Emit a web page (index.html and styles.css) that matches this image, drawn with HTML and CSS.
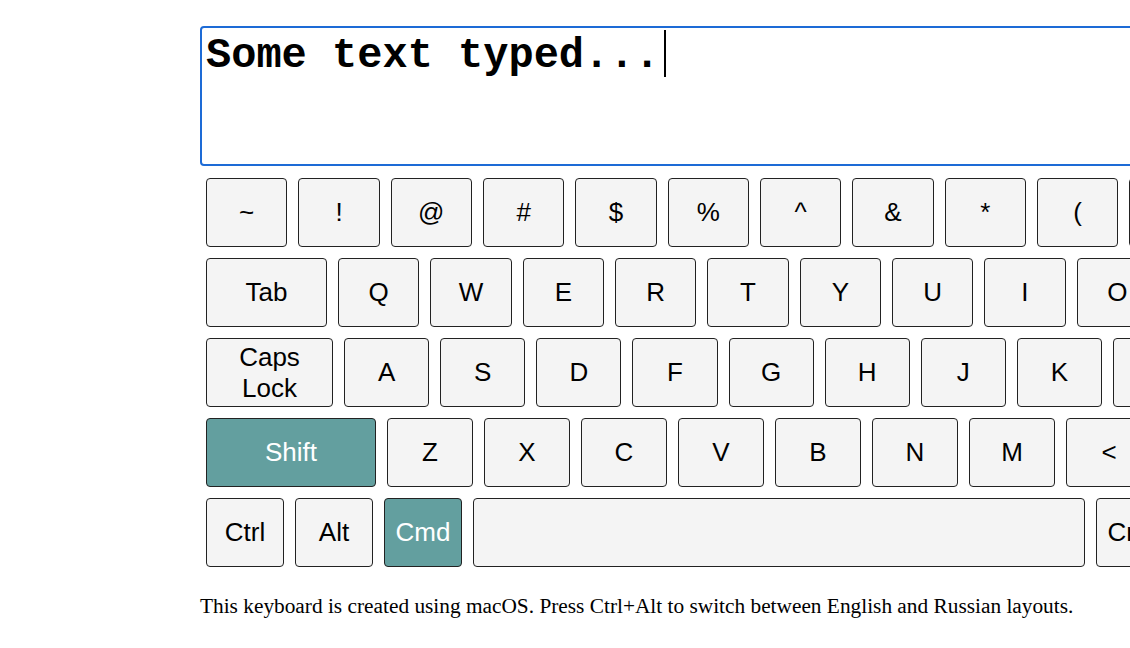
FILE: index.html
```html
<!DOCTYPE html>
<html>
<head>
<meta charset="utf-8">
<link rel="stylesheet" href="styles.css">
</head>
<body>
<div class="wrap">
  <div class="screen">Some text typed...<span class="caret"></span></div>
  <div class="keyboard">
    <div class="row r1">
      <div class="key">~</div><div class="key">!</div><div class="key">@</div><div class="key">#</div><div class="key">$</div><div class="key">%</div><div class="key">^</div><div class="key">&amp;</div><div class="key">*</div><div class="key">(</div><div class="key">)</div><div class="key">_</div><div class="key">+</div><div class="key">Backspace</div>
    </div>
    <div class="row r2">
      <div class="key tab">Tab</div><div class="key">Q</div><div class="key">W</div><div class="key">E</div><div class="key">R</div><div class="key">T</div><div class="key">Y</div><div class="key">U</div><div class="key">I</div><div class="key">O</div><div class="key">P</div><div class="key">{</div><div class="key">}</div><div class="key">|</div>
    </div>
    <div class="row r3">
      <div class="key caps">Caps<br>Lock</div><div class="key">A</div><div class="key">S</div><div class="key">D</div><div class="key">F</div><div class="key">G</div><div class="key">H</div><div class="key">J</div><div class="key">K</div><div class="key">L</div><div class="key">:</div><div class="key">"</div><div class="key">Enter</div>
    </div>
    <div class="row r4">
      <div class="key shift on">Shift</div><div class="key">Z</div><div class="key">X</div><div class="key">C</div><div class="key">V</div><div class="key">B</div><div class="key">N</div><div class="key">M</div><div class="key">&lt;</div><div class="key">&gt;</div><div class="key">?</div><div class="key shift">Shift</div>
    </div>
    <div class="row r5">
      <div class="key">Ctrl</div><div class="key">Alt</div><div class="key on">Cmd</div><div class="key space"></div><div class="key">Cmd</div><div class="key">Alt</div><div class="key">Ctrl</div>
    </div>
  </div>
  <p class="note">This keyboard is created using macOS. Press Ctrl+Alt to switch between English and Russian layouts.</p>
</div>
</body>
</html>
```

FILE: styles.css
```css
html, body {
  margin: 0;
  padding: 0;
  overflow: hidden;
  background: #fff;
}

.wrap {
  width: 1600px;
  padding: 26px 0 0 200px;
}

.screen {
  box-sizing: border-box;
  width: 1300px;
  height: 140px;
  border: 2px solid #1d6bd6;
  border-radius: 4px;
  padding: 5px 4px 3px 4px;
  font-family: "Liberation Mono", "Courier New", monospace;
  font-size: 42px;
  font-weight: bold;
  line-height: 47px;
  color: #000;
  white-space: pre;
}

.caret {
  display: inline-block;
  width: 2px;
  height: 47px;
  margin-left: 4px;
  background: #000;
  vertical-align: top;
  transform: translateY(-3px);
}

.keyboard {
  margin-top: 12px;
  padding-left: 6px;
  display: flex;
  flex-direction: column;
  gap: 11px;
}

.row {
  display: flex;
  gap: 11px;
}

.key {
  box-sizing: border-box;
  flex: 0 0 auto;
  height: 69px;
  border: 1px solid #222;
  border-radius: 4px;
  background: #f4f4f4;
  display: flex;
  align-items: center;
  justify-content: center;
  text-align: center;
  font-family: "Liberation Sans", Arial, sans-serif;
  font-size: 26px;
  line-height: 31px;
  color: #000;
}

.r1 .key { width: 81.33px; }
.r2 .key { width: 81.33px; }
.r2 .tab { width: 121px; }
.r3 .key { width: 85.14px; }
.r3 .caps { width: 127px; }
.r4 .key { width: 86px; }
.r4 .shift { width: 170px; }
.r5 .key { width: 78px; }
.r5 .space { width: 612px; }

.key.on {
  background: #639f9f;
  color: #fff;
}

.note {
  margin: 27px 0 0 0;
  font-family: "Liberation Serif", "Times New Roman", serif;
  font-size: 21.33px;
  line-height: 25px;
  color: #000;
}
```
